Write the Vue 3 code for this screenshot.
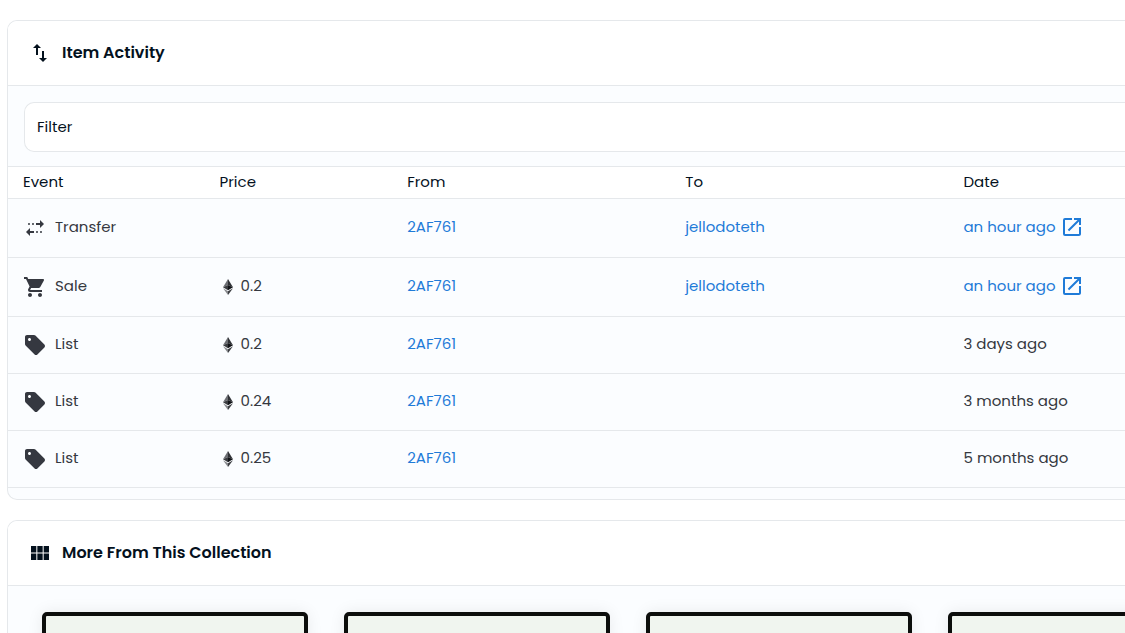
<script setup>
const columns = ['Event', 'Price', 'From', 'To', 'Date']

const iconPaths = {
  transfer:
    'M17 4l4 4-4 4V9h-4V7h4V4zM10 9a1 1 0 1 0 0-2 1 1 0 0 0 0 2zM6 9a1 1 0 1 0 0-2 1 1 0 0 0 0 2zM7 20v-3h4v-2H7v-3l-4 4 4 4zM14 17a1 1 0 1 0 0-2 1 1 0 0 0 0 2zM18 17a1 1 0 1 0 0-2 1 1 0 0 0 0 2z',
  sale:
    'M7 18c-1.1 0-1.99.9-1.99 2S5.9 22 7 22s2-.9 2-2-.9-2-2-2zM1 2v2h2l3.6 7.59-1.35 2.45c-.16.28-.25.61-.25.96 0 1.1.9 2 2 2h12v-2H7.42c-.14 0-.25-.11-.25-.25l.03-.12.9-1.63h7.45c.75 0 1.41-.41 1.75-1.03l3.58-6.49c.08-.14.12-.31.12-.48 0-.55-.45-1-1-1H5.21l-.94-2H1zm16 16c-1.1 0-1.99.9-1.99 2s.89 2 1.99 2 2-.9 2-2-.9-2-2-2z',
  list:
    'M21.41 11.58l-9-9C12.05 2.22 11.55 2 11 2H4c-1.1 0-2 .9-2 2v7c0 .55.22 1.05.59 1.42l9 9c.36.36.86.58 1.41.58.55 0 1.05-.22 1.41-.59l7-7c.37-.36.59-.86.59-1.41 0-.55-.23-1.06-.59-1.42zM6.5 8C5.67 8 5 7.33 5 6.5S5.67 5 6.5 5 8 5.67 8 6.5 7.33 8 6.5 8z',
}

const events = [
  { type: 'transfer', label: 'Transfer', price: '', from: '2AF761', to: 'jellodoteth', date: 'an hour ago', linked: true },
  { type: 'sale', label: 'Sale', price: '0.2', from: '2AF761', to: 'jellodoteth', date: 'an hour ago', linked: true },
  { type: 'list', label: 'List', price: '0.2', from: '2AF761', to: '', date: '3 days ago', linked: false },
  { type: 'list', label: 'List', price: '0.24', from: '2AF761', to: '', date: '3 months ago', linked: false },
  { type: 'list', label: 'List', price: '0.25', from: '2AF761', to: '', date: '5 months ago', linked: false },
]
</script>

<template>
  <main class="page">
    <section class="panel activity">
      <header class="panel-header">
        <svg class="icon" viewBox="0 0 24 24" aria-hidden="true">
          <path d="M9 3L5 6.99h3V14h2V6.99h3L9 3zm7 14.01V10h-2v7.01h-3L15 21l4-3.99h-3z" />
        </svg>
        <h2>Item Activity</h2>
      </header>
      <div class="filter-row">
        <button class="filter" type="button">Filter</button>
      </div>
      <table>
        <colgroup>
          <col class="col-event" />
          <col class="col-price" />
          <col class="col-account" />
          <col class="col-account" />
          <col />
        </colgroup>
        <thead>
          <tr>
            <th v-for="name in columns" :key="name" scope="col">{{ name }}</th>
          </tr>
        </thead>
        <tbody>
          <tr v-for="(event, index) in events" :key="index" :class="{ tall: event.linked }">
            <td>
              <div class="cell">
                <svg class="icon" viewBox="0 0 24 24" aria-hidden="true">
                  <path :d="iconPaths[event.type]" />
                </svg>
                <span class="label">{{ event.label }}</span>
              </div>
            </td>
            <td>
              <div v-if="event.price" class="cell price">
                <svg class="eth" viewBox="0 0 10 16" aria-hidden="true">
                  <path fill="#6b6d72" d="M5 0L0 8.2l5-2.3z" />
                  <path fill="#303236" d="M5 0l5 8.2-5-2.3z" />
                  <path fill="#3a3c40" d="M5 5.9L0 8.2l5 3z" />
                  <path fill="#111317" d="M5 5.9l5 2.3-5 3z" />
                  <path fill="#85878b" d="M0 9.2l5 3V16z" />
                  <path fill="#3a3c40" d="M10 9.2l-5 3V16z" />
                </svg>
                <span class="label">{{ event.price }}</span>
              </div>
            </td>
            <td>
              <a class="label" href="#">{{ event.from }}</a>
            </td>
            <td>
              <a v-if="event.to" class="label" href="#">{{ event.to }}</a>
            </td>
            <td>
              <a v-if="event.linked" class="cell date" href="#">
                <span>{{ event.date }}</span>
                <svg class="icon" viewBox="0 0 24 24" aria-hidden="true">
                  <path d="M19 19H5V5h7V3H5a2 2 0 0 0-2 2v14a2 2 0 0 0 2 2h14c1.1 0 2-.9 2-2v-7h-2v7zM14 3v2h3.59l-9.83 9.83 1.41 1.41L19 6.41V10h2V3h-7z" />
                </svg>
              </a>
              <span v-else class="label">{{ event.date }}</span>
            </td>
          </tr>
        </tbody>
      </table>
    </section>

    <section class="panel">
      <header class="panel-header">
        <svg class="icon" viewBox="0 0 24 24" aria-hidden="true">
          <path d="M14.67 5v6.5H9.33V5h5.34zm1 6.5H21V5h-5.33v6.5zm-1 7.5v-6.5H9.33V19h5.34zm1-6.5V19H21v-6.5h-5.33zm-7.34 0H3V19h5.33v-6.5zm0-1V5H3v6.5h5.33z" />
        </svg>
        <h2>More From This Collection</h2>
      </header>
      <div class="collection">
        <article v-for="n in 4" :key="n" class="card"></article>
      </div>
    </section>
  </main>
</template>

<style>
body {
  background: #fff;
}
</style>

<style scoped>
.page {
  display: flex;
  flex-direction: column;
  gap: 20px;
  box-sizing: border-box;
  height: 100vh;
  overflow: hidden;
  padding: 20px 0 0 7px;
  font-family: Poppins, Inter, "Liberation Sans", sans-serif;
  font-size: 15px;
  line-height: 24px;
  color: #04111d;
}

.panel {
  flex: none;
  border: 1px solid #e5e8eb;
  border-right: 0;
  border-radius: 10px 0 0 10px;
  overflow: hidden;
  background: #fbfdff;
}

.activity {
  padding-bottom: 11px;
}

.panel-header {
  display: flex;
  align-items: center;
  gap: 10px;
  height: 64px;
  padding: 0 20px;
  border-bottom: 1px solid #e5e8eb;
  background: #fff;
}

h2 {
  margin: 0;
  font-size: 16px;
  font-weight: 600;
}

.icon {
  flex: none;
  width: 24px;
  height: 24px;
  fill: currentColor;
}

.filter-row {
  padding: 16px 0 14px 16px;
}

.filter {
  display: block;
  width: 100%;
  height: 50px;
  padding: 0 12px;
  border: 1px solid #e5e8eb;
  border-right: 0;
  border-radius: 10px 0 0 10px;
  background: #fff;
  color: inherit;
  font: inherit;
  text-align: left;
}

table {
  width: 100%;
  table-layout: fixed;
  border-collapse: separate;
  border-spacing: 0;
}

.col-event {
  width: 17.6%;
}

.col-price {
  width: 16.8%;
}

.col-account {
  width: 24.9%;
}

th {
  height: 29px;
  padding: 0 15px 2px;
  border-top: 1px solid #e5e8eb;
  border-bottom: 1px solid #e5e8eb;
  background: #fff;
  font-weight: 400;
  text-align: left;
}

td {
  height: 56px;
  padding: 0 15px;
  border-bottom: 1px solid #e5e8eb;
  color: #353840;
}

.tall td {
  height: 58px;
}

.cell {
  display: flex;
  align-items: center;
  gap: 8px;
}

.price {
  padding-left: 3px;
}

.date {
  gap: 4px;
  padding-bottom: 2px;
}

.label {
  display: inline-block;
  padding-bottom: 2px;
}

a {
  color: #1f7bd8;
  text-decoration: none;
}

.eth {
  flex: none;
  width: 10px;
  height: 16px;
}

.collection {
  display: flex;
  gap: 36px;
  padding: 26px 0 26px 34px;
}

.card {
  flex: 0 0 266px;
  box-sizing: border-box;
  height: 266px;
  border: 4px solid #0c0e0c;
  border-radius: 5px;
  background: #f0f5ef;
  box-shadow: 0 0 16px rgba(4, 17, 29, 0.08);
}
</style>
